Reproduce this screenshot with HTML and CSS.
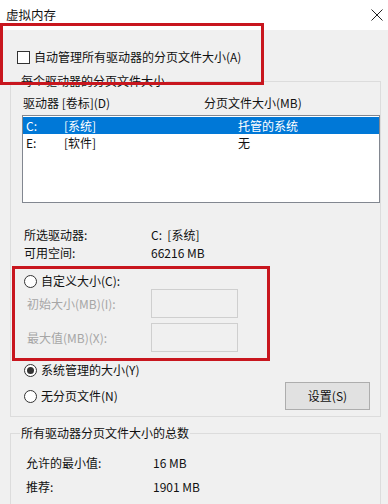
FILE: index.html
```html
<!doctype html>
<html>
    <head>
        <meta charset="utf-8"/>
        <link rel="stylesheet" href="styles.css">
    </head>
    <body>
        <header class="titlebar">
            <span class="title">虚拟内存</span>
            <svg class="close" width="12" height="12" viewBox="0 0 12 12">
                <path d="M0.5 0.5 L11.5 11.5 M11.5 0.5 L0.5 11.5" stroke="#222" stroke-width="1" fill="none"/>
            </svg>
        </header>

        <label class="auto">
            <span class="check"></span>
            <span>自动管理所有驱动器的分页文件大小(A)</span>
        </label>

        <fieldset class="group">
            <legend>每个驱动器的分页文件大小</legend>
            <div class="cols">
                <span>驱动器 [卷标](D)</span>
                <span>分页文件大小(MB)</span>
            </div>
            <div class="list">
                <div class="row sel"><span>C:</span><span>[系统]</span><span>托管的系统</span></div>
                <div class="row"><span>E:</span><span>[软件]</span><span>无</span></div>
            </div>

            <div class="info">
                <span>所选驱动器:</span><span>C:&nbsp; [系统]</span>
                <span>可用空间:</span><span>66216 MB</span>
            </div>

            <label class="option first">
                <span class="radio"></span>
                <span>自定义大小(C):</span>
            </label>
            <div class="field disabled">
                <span>初始大小(MB)(I):</span>
                <div class="edit"></div>
            </div>
            <div class="field disabled">
                <span>最大值(MB)(X):</span>
                <div class="edit"></div>
            </div>

            <label class="option second">
                <span class="radio on"></span>
                <span>系统管理的大小(Y)</span>
            </label>
            <div class="last-row">
                <label class="option">
                    <span class="radio"></span>
                    <span>无分页文件(N)</span>
                </label>
                <button class="btn">设置(S)</button>
            </div>
        </fieldset>

        <fieldset class="group totals">
            <legend>所有驱动器分页文件大小的总数</legend>
            <div class="info2">
                <span>允许的最小值:</span><span>16 MB</span>
                <span>推荐:</span><span>1901 MB</span>
            </div>
        </fieldset>

        <div class="mark mark-auto"></div>
        <div class="mark mark-custom"></div>
    </body>
</html>
```

FILE: styles.css
```css
:root {
	--face: #f0f0f0;
	--text: #111;
	--muted: #a6a6a6;
	--line: #dcdcdc;
	--select: #0078d7;
	--mark: #c8161e;
}

html, body {
	margin: 0;
	height: 100%;
	overflow: hidden;
}

body {
	position: relative;
	background: var(--face);
	color: var(--text);
	font: 12px/16px "Noto Sans CJK SC", sans-serif;
}

.titlebar {
	height: 30px;
	background: #fff;
	display: flex;
	align-items: center;
	justify-content: space-between;
	padding: 0 5px 0 6px;
}

.title {
	font-size: 12.5px;
}

.close {
	display: block;
}

.auto {
	display: flex;
	align-items: center;
	gap: 4px;
	height: 16px;
	margin: 19px 0 0 17px;
}

.check {
	box-sizing: border-box;
	width: 13px;
	height: 13px;
	border: 1px solid #333;
	background: #fff;
}

.group {
	margin: 8px 7px 0 10px;
	padding: 6px 0 6px 11px;
	border: 1px solid var(--line);
	min-width: 0;
}

.group legend {
	padding: 0 1px;
	margin-left: -2px;
	line-height: 16px;
}

.cols {
	display: grid;
	grid-template-columns: 181px 1fr;
	padding-left: 1px;
}

.list {
	box-sizing: border-box;
	height: 88px;
	margin-top: 4px;
	padding: 1px 0;
	border: 1px solid #828790;
	background: #fff;
}

.row {
	display: grid;
	grid-template-columns: 38px 174px 1fr;
	height: 17px;
	line-height: 17px;
	padding-left: 3px;
}

.row.sel {
	background: var(--select);
	color: #fff;
}

.info {
	display: grid;
	grid-template-columns: 127px 1fr;
	line-height: 18px;
	margin-top: 23px;
	padding-left: 2px;
}

.option {
	display: flex;
	align-items: center;
	gap: 4px;
	height: 16px;
	padding-left: 2px;
}

.option.first {
	margin-top: 11px;
}

.option.second {
	margin-top: 10px;
}

.radio {
	box-sizing: border-box;
	width: 13px;
	height: 13px;
	border: 1px solid #333;
	border-radius: 50%;
	background: #fff;
	display: flex;
	align-items: center;
	justify-content: center;
}

.radio.on::after {
	content: "";
	width: 7px;
	height: 7px;
	border-radius: 50%;
	background: #333;
}

.field {
	display: grid;
	grid-template-columns: 124px 87px;
	align-items: center;
	padding-left: 5px;
	margin-bottom: 5px;
}

.disabled {
	color: var(--muted);
}

.edit {
	box-sizing: border-box;
	height: 29px;
	border: 1px solid #cfcfcf;
	background: var(--face);
}

.last-row {
	display: flex;
	align-items: center;
	justify-content: space-between;
	height: 28px;
	margin-top: 4px;
	padding-right: 10px;
}

.btn {
	box-sizing: border-box;
	width: 85px;
	height: 28px;
	border: 1px solid #adadad;
	background: #e1e1e1;
	color: var(--text);
	font: inherit;
	padding: 0;
}

.totals {
	padding: 14px 0 0 11px;
	border-bottom: none;
	min-height: 80px;
}

.info2 {
	display: grid;
	grid-template-columns: 127px 1fr;
	row-gap: 8px;
	padding-left: 4px;
}

.mark {
	position: absolute;
	border: 3px solid var(--mark);
}

.mark-auto {
	left: 0;
	top: 23px;
	width: 258px;
	height: 56px;
}

.mark-custom {
	left: 12px;
	top: 266px;
	width: 252px;
	height: 89px;
}
```
